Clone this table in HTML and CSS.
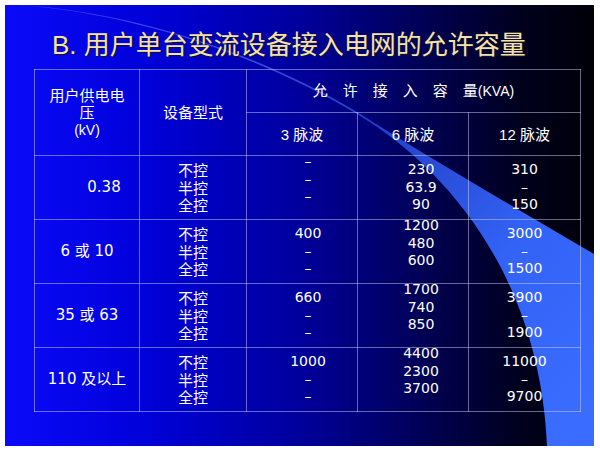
FILE: index.html
```html
<!DOCTYPE html>
<html>
<head>
  <meta charset="utf-8">
  <title>用户单台变流设备接入电网的允许容量</title>
  <link rel="stylesheet" href="styles.css">
</head>
<body>
  <div class="slide">
    <!-- decorative swoosh behind the content -->
    <svg class="swoosh" width="589" height="441" viewBox="0 0 589 441">
      <defs>
        <linearGradient id="sw" gradientUnits="userSpaceOnUse" x1="80" y1="0" x2="560" y2="420">
          <stop offset="0" stop-color="#7f9cff" stop-opacity="0.45"/>
          <stop offset="0.45" stop-color="#2c4ee0" stop-opacity="0.8"/>
          <stop offset="0.75" stop-color="#3262f6"/>
          <stop offset="1" stop-color="#3a6cff"/>
        </linearGradient>
      </defs>
      <path fill="url(#sw)" d="M0,-1 C115,4 245,43 352,107 C425,153 505,200 589,249 L589,441 L542,441 C535,275 445,165 352,109 C245,45 115,5 0,-1 Z"/>
    </svg>

    <div class="content">
      <h1 class="title">B. 用户单台变流设备接入电网的允许容量</h1>

      <table class="cap">
        <colgroup>
          <col class="w1"><col class="w2"><col class="w3"><col class="w4"><col class="w5">
        </colgroup>
        <tr class="head">
          <th rowspan="2">用户供电电<br>压<br><span class="unit">(kV)</span></th>
          <th rowspan="2">设备型式</th>
          <th colspan="3">允　许　接　入　容　量<span class="unit">(KVA)</span></th>
        </tr>
        <tr class="head">
          <th>3 脉波</th>
          <th>6 脉波</th>
          <th>12 脉波</th>
        </tr>
        <tr class="row">
          <td class="volt shift">0.38</td>
          <td class="kind">不控<br>半控<br>全控</td>
          <td class="c3"><div class="up">–<br>–<br>–</div></td>
          <td class="c6">230<br>63.9<br>90</td>
          <td>310<br>–<br>150</td>
        </tr>
        <tr class="row">
          <td class="volt">6 或 10</td>
          <td class="kind">不控<br>半控<br>全控</td>
          <td class="c3">400<br>–<br>–</td>
          <td class="c6"><div class="up">1200<br>480<br>600</div></td>
          <td>3000<br>–<br>1500</td>
        </tr>
        <tr class="row">
          <td class="volt">35 或 63</td>
          <td class="kind">不控<br>半控<br>全控</td>
          <td class="c3">660<br>–<br>–</td>
          <td class="c6"><div class="up">1700<br>740<br>850</div></td>
          <td>3900<br>–<br>1900</td>
        </tr>
        <tr class="row">
          <td class="volt">110 及以上</td>
          <td class="kind">不控<br>半控<br>全控</td>
          <td class="c3">1000<br>–<br>–</td>
          <td class="c6"><div class="up">4400<br>2300<br>3700</div></td>
          <td>11000<br>–<br>9700</td>
        </tr>
      </table>
    </div>
  </div>
</body>
</html>
```

FILE: styles.css
```css
body {
  margin: 0;
  background-color: #fff;
  font-family: "Liberation Sans", "Noto Sans CJK SC", sans-serif;
}

.slide {
  position: relative;
  width: 589px;
  height: 441px;
  margin: 5px;
  overflow: hidden;
  background: linear-gradient(to right, #0a0afa 0%, #0000d8 25%, #00009c 50%, #000052 72%, #00001c 88%, #000008 100%);
}

.swoosh {
  position: absolute;
  left: 0;
  top: 0;
}

.content {
  position: relative;
  padding: 24px 0 0 29px;
}

.title {
  margin: 0;
  padding-left: 18px;
  font-size: 26px;
  line-height: 32px;
  font-weight: normal;
  color: #f5e2a5;
  text-shadow: 1px 1px 1px #10103a;
}

.cap {
  margin-top: 8px;
  border-collapse: collapse;
  table-layout: fixed;
  color: #fff;
  border: 1px solid rgba(215, 215, 250, 0.7);
}

.w1 { width: 105px; }
.w2 { width: 107px; }
.w3 { width: 111px; }
.w4 { width: 111px; }
.w5 { width: 112px; }

.cap th,
.cap td {
  border: 1px solid rgba(205, 205, 245, 0.5);
  padding: 0;
  text-align: center;
  vertical-align: middle;
}

.cap th {
  font-weight: normal;
  font-size: 15px;
  line-height: 17px;
}

.head {
  height: 43px;
}

.row {
  height: 64px;
}

.unit {
  font-size: 14px;
}

.cap td {
  font-family: "DejaVu Sans", "Noto Sans CJK SC", sans-serif;
  font-size: 14px;
  line-height: 17.5px;
}

.cap td.volt,
.cap td.kind {
  font-size: 15px;
}

.cap td.kind {
  font-family: "Noto Sans CJK SC", sans-serif;
}

.cap td.shift {
  padding-left: 34px;
}

.cap td.c3 {
  padding-left: 12px;
}

.cap td.c6 {
  padding-left: 16px;
}

/* lifts the three lines a little above the row's middle */
.up {
  margin-top: -16px;
}
```
